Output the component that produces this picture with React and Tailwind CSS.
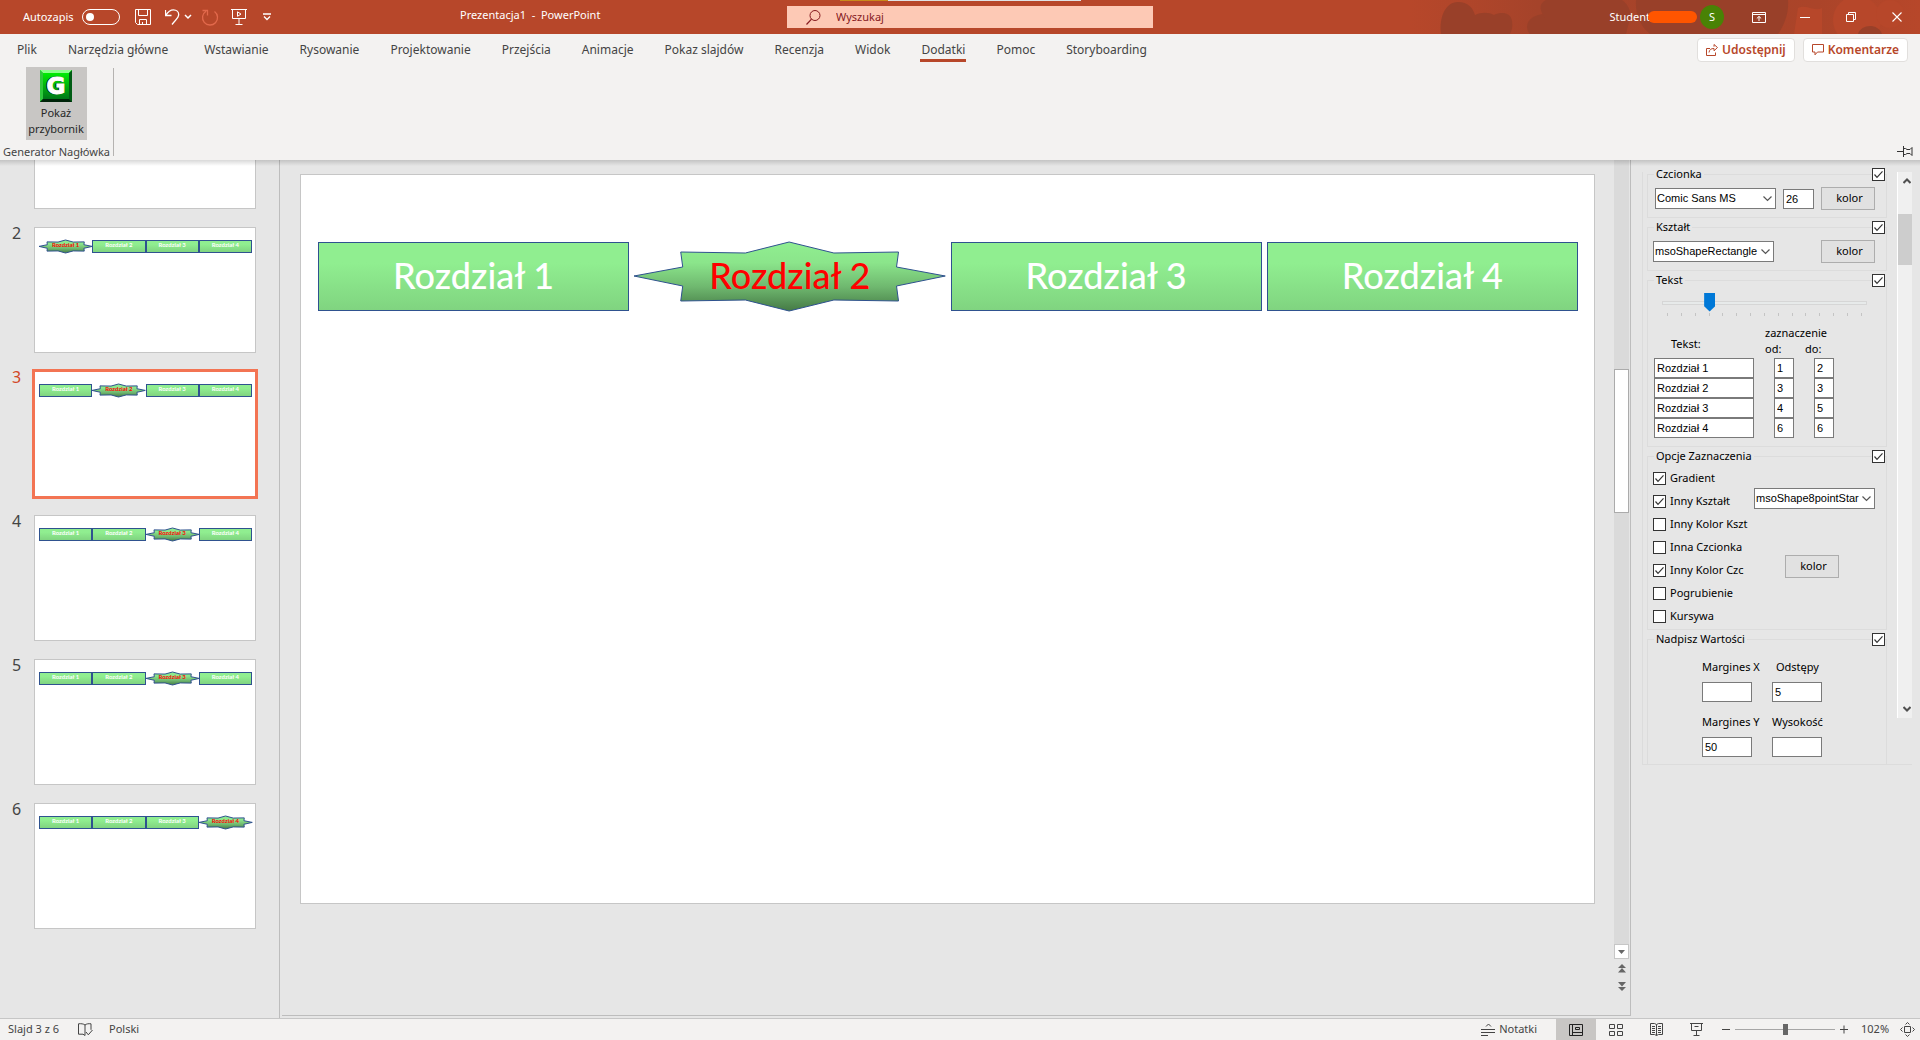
import React from "react";

const STAR =
  "156,0 201,11 266,10 264,25 313,34 264,44 266,59 201,58 156,69 112,58 47,59 49,44 0,34 49,25 47,10 112,11";

function Icon({ w = 16, h = 16, className = "", children }) {
  return (
    <svg
      width={w}
      height={h}
      viewBox={`0 0 ${w} ${h}`}
      fill="none"
      stroke="currentColor"
      strokeWidth="1"
      className={`shrink-0 ${className}`}
      aria-hidden="true"
    >
      {children}
    </svg>
  );
}

/* ---------- title bar ---------- */

function TitleArt() {
  return (
    <svg
      className="absolute inset-y-0 right-0 h-full w-[510px]"
      viewBox="0 0 510 34"
      preserveAspectRatio="xMaxYMid slice"
      aria-hidden="true"
    >
      <defs>
        <linearGradient id="art" x1="0" x2="1">
          <stop offset="0" stopColor="#a8442b" stopOpacity="0" />
          <stop offset="0.25" stopColor="#a5432a" />
          <stop offset="0.8" stopColor="#ab4429" />
          <stop offset="1" stopColor="#b7472a" />
        </linearGradient>
      </defs>
      <rect width="510" height="34" fill="url(#art)" />
      <g fill="#994029">
        <path d="M31 34c-2-16 4-32 17-32 10 0 15 6 17 13 6-3 14-3 19 0 8-4 17-2 18 6 1 5 0 9-2 13z" />
        <ellipse cx="135" cy="27" rx="18" ry="13" />
        <path d="M135 34V18C128 8 130 3 136 0h76c8 6 10 14 7 22l-3 12z" />
        <path d="M226 0h152c1 12-3 24-10 34h-128c-10-8-15-20-14-34z" />
      </g>
      <g fill="#b7472a">
        <circle cx="447" cy="20" r="24" />
        <path d="M388 8c8-4 16 4 24 0v26h-28z" />
        <circle cx="480" cy="14" r="14" />
      </g>
      <path d="M448 34c3-10 20-11 24 0z" fill="#994029" />
    </svg>
  );
}

function TitleBar() {
  return (
    <header className="relative flex h-[34px] shrink-0 items-center bg-[#b7472a] text-[12px] text-white">
      <TitleArt />
      <div className="absolute left-[840px] top-0 flex h-px w-[241px]">
        <span className="w-12 bg-[#c98a1b]" />
        <span className="flex-1 bg-[#dfe3e6]" />
      </div>
      <div className="flex w-[460px] shrink-0 items-center pb-1 pl-[23px] pt-1">
        <label htmlFor="autosave" className="w-[59px] text-[11px]">Autozapis</label>
        <input
          id="autosave"
          type="checkbox"
          role="switch"
          className="relative h-4 w-[38px] appearance-none rounded-full border border-white before:absolute before:left-[3px] before:top-[3px] before:h-2 before:w-2 before:rounded-full before:bg-white"
        />
        <button aria-label="Zapisz" className="ml-[15px]">
          <Icon w={16} h={16}>
            <path d="M.5.5h15v15H2.5l-2-2zM3.5.5v6h9v-6M4.5 15.5v-5h7v5M7.5 15v-2" />
          </Icon>
        </button>
        <button aria-label="Cofnij" className="ml-[14px]">
          <Icon w={15} h={16}>
            <path d="M.5 1v5.5h6M.8 6.300C3 2.500 5.500.8 8.500.8c3 0 5.200 2 5.200 4.800 0 3.500-3 5-6.700 9.900" strokeWidth="1.300" />
          </Icon>
        </button>
        <button aria-label="Opcje cofania" className="ml-1">
          <Icon w={8} h={6}><path d="M1 1l3 3 3-3" strokeWidth="1.500" /></Icon>
        </button>
        <button aria-label="Ponów" className="ml-[9px] text-[#e2694c]">
          <Icon w={18} h={17}>
            <path d="M5 2.200A7.500 7.500 0 1 0 13.500 2.500M1.500 1.500h5v5" strokeWidth="1.300" />
          </Icon>
        </button>
        <button aria-label="Pokaz od początku" className="ml-3">
          <Icon w={16} h={16}>
            <path d="M0 .5h16M1.500.5v9h13v-9M8 9.500v6M4.500 15.500h7" />
            <path d="M6.500 2.800v4.500l3.500-2.200z" />
          </Icon>
        </button>
        <button aria-label="Dostosuj pasek" className="ml-4">
          <Icon w={8} h={8}><path d="M0 1h8M1 3.500l3 3 3-3" strokeWidth="1.300" /></Icon>
        </button>
      </div>
      <h1 className="w-[327px] shrink-0 whitespace-pre pb-1 text-[11px]">Prezentacja1  -  PowerPoint</h1>
      <div className="flex h-[22px] w-[366px] shrink-0 items-center bg-[#fdc9b5] pl-[19px] text-[#861a1f]">
        <Icon w={15} h={15}>
          <circle cx="9" cy="5.500" r="5" />
          <path d="M5.500 9.200L.5 14.500" strokeWidth="1.200" />
        </Icon>
        <input
          aria-label="Wyszukaj"
          placeholder="Wyszukaj"
          className="ml-[15px] min-w-0 flex-1 bg-transparent text-[11px] outline-none placeholder:text-[#861a1f]"
        />
      </div>
      <div className="relative ml-auto flex items-center pr-[18px]">
        <span className="text-[11px]">Student</span>
        <span className="-ml-[2px] h-3 w-[49px] rounded-full bg-[#ff5500]" />
        <span className="ml-[3px] flex h-6 w-6 items-center justify-center rounded-full bg-[#498205] text-[11px]">S</span>
        <button aria-label="Opcje wyświetlania Wstążki" className="ml-7">
          <Icon w={14} h={11}>
            <path d="M.5.5h13v10H.5zM.5 2.500h13M7 9V4.500M4.800 6.500L7 4.400l2.200 2.100" />
          </Icon>
        </button>
        <button aria-label="Minimalizuj" className="ml-[34px]">
          <Icon w={10} h={10}><path d="M0 5.500h10" /></Icon>
        </button>
        <button aria-label="Przywróć" className="ml-9">
          <Icon w={10} h={10}><path d="M.5 2.500h7v7h-7zM2.500 2.500v-2h7v7h-2" /></Icon>
        </button>
        <button aria-label="Zamknij" className="ml-9">
          <Icon w={10} h={10}><path d="M.5.5l9 9M9.500.5l-9 9" strokeWidth="1.100" /></Icon>
        </button>
      </div>
    </header>
  );
}

/* ---------- ribbon ---------- */

const TABS = [
  "Plik", "Narzędzia główne", "Wstawianie", "Rysowanie", "Projektowanie", "Przejścia", "Animacje",
  "Pokaz slajdów", "Recenzja", "Widok", "Dodatki", "Pomoc", "Storyboarding",
];

function Tabs() {
  return (
    <nav className="flex h-[33px] items-center pl-4 pr-3 text-[12px] text-[#444]">
      <div className="flex h-full items-center gap-[29px]">
        {TABS.map((t) => (
          <button
            key={t}
            className={`h-[23px] whitespace-nowrap border-b-[3px] pl-px pt-[2px] ${
              t === "Dodatki" ? "border-[#b7472a]" : "border-transparent"
            } ${t === "Narzędzia główne" ? "pr-[6px]" : "pr-px"}`}
          >
            {t}
          </button>
        ))}
      </div>
      <div className="mb-[2px] ml-auto flex gap-2 text-[12px] font-semibold text-[#b7472a]">
        <button className="flex h-6 items-center gap-1 rounded-sm border border-[#e1dfdd] bg-white px-2">
          <Icon w={12} h={12}>
            <path d="M4 4.500H.5v7h9V8.500M3 8.500c.5-3 2-4 5-4V6.800L11.500 3.500 8 .5v2.200" />
          </Icon>
          Udostępnij
        </button>
        <button className="flex h-6 items-center gap-1 rounded-sm border border-[#e1dfdd] bg-white px-2">
          <Icon w={12} h={12}><path d="M.5.5h11v7.500H5.500L3 10.800V8H.5z" /></Icon>
          Komentarze
        </button>
      </div>
    </nav>
  );
}

function Logo() {
  return (
    <svg width="32" height="32" viewBox="0 0 32 32" aria-hidden="true">
      <defs>
        <linearGradient id="lg" x1="0" y1="0" x2="0" y2="1">
          <stop offset="0" stopColor="#00fa00" />
          <stop offset="1" stopColor="#006a1c" />
        </linearGradient>
      </defs>
      <rect width="32" height="32" fill="url(#lg)" />
      <path d="M0 0h32l-3 3H3z" fill="#8dff8d" />
      <path d="M0 0l3 3v26l-3 3z" fill="#2fc93c" />
      <path d="M32 0v32l-3-3V3z" fill="#005c14" />
      <path d="M0 32l3-3h26l3 3z" fill="#00240a" />
      <text x="15" y="24" textAnchor="middle" fontFamily="DejaVu Sans" fontWeight="700" fontSize="23" fill="#062a0a" stroke="#062a0a" strokeWidth="1">G</text>
      <text x="16" y="24" textAnchor="middle" fontFamily="DejaVu Sans" fontWeight="700" fontSize="23" fill="#fff" stroke="#fff" strokeWidth="1">G</text>
    </svg>
  );
}

function Ribbon() {
  return (
    <div className="flex h-[93px] items-start justify-between pr-[7px] text-[11px] text-[#444]">
      <section className="mt-px flex h-[88px] flex-col items-center justify-between border-r border-[#b5b3b1] px-[3px]">
        <button className="-mt-px mr-px flex h-[73px] w-[61px] flex-col items-center bg-[#c8c6c4] pt-[3px] leading-4 text-[#262626]">
          <Logo />
          <span className="mt-[3px]">Pokaż</span>
          <span>przybornik</span>
        </button>
        <h2 className="leading-[9px]">Generator Nagłówka</h2>
      </section>
      <button aria-label="Przypnij Wstążkę" className="mt-[79px] text-[#333]">
        <Icon w={16} h={11}>
          <path d="M0 5.500h6M6.500 0v11M6.500 2.500h2l1.500 1h3l2-2v8l-2-2h-3l-1.500 1h-2" />
        </Icon>
      </button>
    </div>
  );
}

/* ---------- slides ---------- */

const CHAPTERS = ["Rozdział 1", "Rozdział 2", "Rozdział 3", "Rozdział 4"];

function Star() {
  return (
    <svg className="absolute inset-0 h-full w-full overflow-visible" viewBox="0 0 313 69" preserveAspectRatio="none" aria-hidden="true">
      <defs>
        <linearGradient id="star" x1="0" y1="0" x2="0" y2="1">
          <stop offset="0" stopColor="#90ee90" />
          <stop offset="0.3" stopColor="#8be58b" />
          <stop offset="0.65" stopColor="#6fb86f" />
          <stop offset="1" stopColor="#457a45" />
        </linearGradient>
      </defs>
      <polygon points={STAR} fill="url(#star)" stroke="#2f528f" strokeWidth="1" vectorEffect="non-scaling-stroke" />
    </svg>
  );
}

function Bars({ active, small }) {
  return (
    <div
      className={
        small
          ? "grid grid-cols-4 pl-1 pr-[3px] pt-3 text-[6px]"
          : "grid grid-cols-4 gap-[5px] pl-[17px] pr-4 pt-[67px] text-[36px]"
      }
    >
      {CHAPTERS.map((c, i) => (
        <div
          key={c}
          className={
            (small
              ? "relative flex h-[13px] items-center justify-center pb-[3px] font-bold "
              : "relative flex h-[69px] items-center justify-center pb-1 font-medium ") +
            (i === active
              ? "text-[#ff0000]"
              : "border border-[#2f528f] bg-linear-to-b from-[#90ee90] from-30% to-[#80d480] text-white")
          }
        >
          {i === active && <Star />}
          <span className="relative whitespace-nowrap font-['Lato',sans-serif] leading-none">{c}</span>
        </div>
      ))}
    </div>
  );
}

function Thumb({ n, active, selected }) {
  return (
    <li className="flex h-[126px] pl-3">
      <span className={selected ? "w-[22px] text-[16px] leading-3 text-[#d24726]" : "w-[22px] text-[16px] leading-3 text-[#444]"}>
        {n}
      </span>
      <button
        aria-label={`Slajd ${n}`}
        className={
          selected
            ? "flex h-full w-[222px] flex-col border border-[#f37453] bg-white text-left outline-2 outline-[#f37453]"
            : "flex h-full w-[222px] flex-col border border-[#c6c6c6] bg-white text-left"
        }
      >
        <span className="block w-full">
          <Bars small active={active} />
        </span>
      </button>
    </li>
  );
}

function SlideList() {
  return (
    <aside className="w-[280px] shrink-0 overflow-hidden border-r border-[#bdbdbd]">
      <ol className="-mt-[77px] flex flex-col gap-[18px]">
        <li className="flex h-[126px] pl-[34px]">
          <button aria-label="Slajd 1" className="h-full w-[222px] border border-[#c6c6c6] bg-white" />
        </li>
        <Thumb n={2} active={0} />
        <Thumb n={3} active={1} selected />
        <Thumb n={4} active={2} />
        <Thumb n={5} active={2} />
        <Thumb n={6} active={3} />
      </ol>
    </aside>
  );
}

function Editor() {
  return (
    <main className="mb-[2px] ml-[2px] flex min-w-0 flex-1 border-b border-r border-[#bdbdbd]">
      <div className="min-w-0 flex-1 pl-[18px] pr-[19px] pt-[14px]">
        <div className="aspect-[1295/730] w-full border border-[#c6c6c6] bg-white">
          <Bars active={1} />
        </div>
      </div>
      <div className="mr-px flex w-[15px] flex-col items-center text-[#666]">
        <div className="w-full flex-1 bg-[#dadada] pt-[209px]">
          <div className="h-36 w-full border border-[#ababab] bg-white" />
        </div>
        <button aria-label="Przewiń w dół" className="flex h-[15px] w-[15px] items-center justify-center border border-[#c6c6c6] bg-white">
          <Icon w={7} h={4}><path d="M0 0h7L3.500 4z" fill="currentColor" stroke="none" /></Icon>
        </button>
        <button aria-label="Poprzedni slajd" className="mt-[5px]">
          <Icon w={8} h={9}><path d="M4 0l4 4H0zM4 4l4 4.500H0z" fill="currentColor" stroke="none" /></Icon>
        </button>
        <button aria-label="Następny slajd" className="mb-6 mt-[9px]">
          <Icon w={8} h={9}><path d="M4 9L0 5h8zM4 4.500L0 0h8z" fill="currentColor" stroke="none" /></Icon>
        </button>
      </div>
    </main>
  );
}

/* ---------- task pane ---------- */

function Check({ label, checked, hidden }) {
  return (
    <label className="flex items-center">
      <span className="relative block h-[13px] w-[13px]">
        <input
          type="checkbox"
          defaultChecked={checked}
          aria-label={hidden ? label : undefined}
          className="peer block h-[13px] w-[13px] appearance-none border border-[#333] bg-white"
        />
        <svg className="pointer-events-none absolute inset-0 hidden peer-checked:block" width="13" height="13" viewBox="0 0 13 13" fill="none" stroke="#333" strokeWidth="1.200" aria-hidden="true">
          <path d="M2.500 6.500L5 9.300l5.500-6" />
        </svg>
      </span>
      {!hidden && <span className="ml-1 whitespace-nowrap">{label}</span>}
    </label>
  );
}

function Select({ value, label }) {
  return (
    <span className="relative block h-[21px] w-[121px]">
      <select
        aria-label={label}
        className="block h-full w-full appearance-none border border-[#7a7a7a] bg-white pl-px font-['Liberation_Sans',sans-serif] text-[11px] outline-none"
      >
        <option>{value}</option>
      </select>
      <Icon w={9} h={6} className="pointer-events-none absolute right-1 top-2 text-[#555]">
        <path d="M.5.5l4 4 4-4" strokeWidth="1.200" />
      </Icon>
    </span>
  );
}

function Field({ value = "", label, width }) {
  return (
    <input
      aria-label={label}
      defaultValue={value}
      className={`block h-5 border border-[#7a7a7a] bg-white pl-[2px] font-['Liberation_Sans',sans-serif] text-[11px] outline-none ${width}`}
    />
  );
}

function ColorButton({ className = "" }) {
  return (
    <button className={`h-[23px] w-[54px] border border-[#adadad] bg-[#e1e1e1] pl-[3px] ${className}`}>kolor</button>
  );
}

function Group({ title, children, className = "" }) {
  return (
    <section className={`border-[#dcdcdc] ${className}`}>
      <header className="-mt-[7px] mr-px flex h-[13px] items-center justify-between">
        <h3 className="ml-[6px] bg-[#e6e6e6] px-[2px] pb-[3px] leading-[13px]">{title}</h3>
        <Check label={title} checked hidden />
      </header>
      {children}
    </section>
  );
}

const RANGES = [[1, 2], [3, 3], [4, 5], [6, 6]];
const OPTIONS = [
  ["Gradient", true], ["Inny Kształt", true], ["Inny Kolor Kszt", false], ["Inna Czcionka", false],
  ["Inny Kolor Czc", true], ["Pogrubienie", false], ["Kursywa", false],
];
const OVERRIDES = [["Margines X", ""], ["Odstępy", "5"], ["Margines Y", "50"], ["Wysokość", ""]];

function TextGroup() {
  return (
    <Group title="Tekst" className="border pb-2">
      <div className="ml-[14px] mt-[6px] w-[205px]">
        <input
          type="range"
          aria-label="Liczba rozdziałów"
          min="0"
          max="14"
          defaultValue="3"
          className="block h-[19px] w-full appearance-none bg-transparent [&::-webkit-slider-runnable-track]:h-1 [&::-webkit-slider-runnable-track]:border [&::-webkit-slider-runnable-track]:border-[#d6d6d6] [&::-webkit-slider-runnable-track]:bg-[#e7eaea] [&::-webkit-slider-thumb]:-mt-[9px] [&::-webkit-slider-thumb]:h-[19px] [&::-webkit-slider-thumb]:w-[11px] [&::-webkit-slider-thumb]:appearance-none [&::-webkit-slider-thumb]:bg-[#0078d7] [&::-webkit-slider-thumb]:[clip-path:polygon(0_0,100%_0,100%_72%,50%_100%,0_72%)]"
        />
        <div className="mt-px flex justify-between px-[5px]">
          {Array.from({ length: 15 }, (_, i) => (
            <span key={i} className="h-[3px] w-px bg-[#c4c4c4]" />
          ))}
        </div>
      </div>
      <div className="ml-[6px] mt-[9px] grid grid-cols-[100px_20px_20px] gap-x-5">
        <span className="row-span-2 self-center pl-[17px] pt-1 leading-4">Tekst:</span>
        <span className="col-span-2 -ml-[9px] leading-4">zaznaczenie</span>
        <span className="-ml-[9px] leading-4">od:</span>
        <span className="-ml-[9px] mb-px leading-4">do:</span>
        {CHAPTERS.map((c, i) => (
          <React.Fragment key={c}>
            <Field value={c} label={`Tekst ${i + 1}`} width="w-[100px]" />
            <Field value={RANGES[i][0]} label={`Od ${i + 1}`} width="w-5" />
            <Field value={RANGES[i][1]} label={`Do ${i + 1}`} width="w-5" />
          </React.Fragment>
        ))}
      </div>
    </Group>
  );
}

function TaskPane() {
  return (
    <aside className="w-[289px] shrink-0 pl-[11px] pr-2 pt-3 text-[11px] text-black">
      <div className="flex items-start border-b border-l border-[#dcdcdc] pl-[4px]">
        <div className="flex w-[240px] flex-col gap-[9px] pt-[2px]">
          <Group title="Czcionka" className="border pb-[7px]">
            <div className="mt-[6px] flex items-center pl-[7px]">
              <Select value="Comic Sans MS" label="Czcionka" />
              <span className="ml-[7px]"><Field value="26" label="Rozmiar" width="w-[31px]" /></span>
              <ColorButton className="ml-[7px]" />
            </div>
          </Group>
          <Group title="Kształt" className="border pb-[7px]">
            <div className="mt-[6px] flex items-center justify-between pl-[5px] pr-[11px]">
              <Select value="msoShapeRectangle" label="Kształt" />
              <ColorButton />
            </div>
          </Group>
          <TextGroup />
          <Group title="Opcje Zaznaczenia" className="border pb-px">
            <div className="mt-1 flex justify-between pl-[5px] pr-[11px]">
              <div className="flex flex-col">
                {OPTIONS.map(([l, on]) => (
                  <div key={l} className="flex h-[23px] items-center">
                    <Check label={l} checked={on} />
                  </div>
                ))}
              </div>
              <div className="flex flex-col items-start pt-[21px]">
                <Select value="msoShape8pointStar" label="Kształt zaznaczenia" />
                <ColorButton className="ml-[31px] mt-[46px]" />
              </div>
            </div>
          </Group>
          <Group title="Nadpisz Wartości" className="border-x border-t pb-[7px]">
            <div className="ml-[54px] mt-[13px] grid grid-cols-[50px_50px] gap-x-5 gap-y-3">
              {OVERRIDES.map(([l, v]) => (
                <label key={l} className="flex flex-col items-start gap-[7px] whitespace-nowrap leading-4">
                  <span className={l === "Odstępy" ? "pl-1" : undefined}>{l}</span>
                  <Field value={v} label={l} width="w-[50px]" />
                </label>
              ))}
            </div>
          </Group>
        </div>
        <div className="ml-auto flex h-[546px] w-[15px] flex-col border-l border-white bg-[#f0f0f0] text-[#505050]">
          <button aria-label="W górę" className="flex h-[18px] items-center pl-[5px]">
            <Icon w={8} h={6}><path d="M.5 5L4 1.500 7.500 5" strokeWidth="2" /></Icon>
          </button>
          <div className="mt-6 h-[51px] w-full bg-[#cdcdcd]" />
          <button aria-label="W dół" className="mt-auto flex h-[18px] items-center pl-[5px]">
            <Icon w={8} h={6}><path d="M.5 1L4 4.500 7.500 1" strokeWidth="2" /></Icon>
          </button>
        </div>
      </div>
    </aside>
  );
}

/* ---------- status bar ---------- */

function StatusBar() {
  return (
    <footer className="flex h-[22px] shrink-0 items-center border-t border-[#c6c6c6] bg-[#f3f2f1] pl-2 pr-[5px] text-[11px] text-[#444]">
      <span>Slajd 3 z 6</span>
      <button aria-label="Sprawdzanie pisowni" className="ml-[19px]">
        <Icon w={15} h={13}>
          <path d="M7 2C5.500.8 3 .5.500.8v10.400h4.500L7 12.500V2zM7 2c1.500-1.200 3.500-1.500 6-1.200v6M8 9l2.300 2.800L14.500 7" />
        </Icon>
      </button>
      <button className="ml-4">Polski</button>
      <button className="ml-auto flex items-center gap-1">
        <Icon w={14} h={13}><path d="M0 6.500h14M0 9.500h14M0 12.500h7M5 3.500L7.500 1 10 3.500" /></Icon>
        Notatki
      </button>
      <button aria-label="Normalny" className="ml-[19px] flex h-full w-10 items-center justify-center bg-[#c8c6c4] text-[#222]">
        <Icon w={14} h={12}><path d="M.5.5h13v11H.5zM3.500.5v11M3.500 8.500h10M6.500 3.500h4v2h-4z" /></Icon>
      </button>
      <button aria-label="Sortowanie slajdów" className="flex h-full w-10 items-center justify-center">
        <Icon w={14} h={12}><path d="M.5.5h5v4h-5zM8.500.5h5v4h-5zM.5 7.500h5v4h-5zM8.500 7.500h5v4h-5z" /></Icon>
      </button>
      <button aria-label="Widok do czytania" className="flex h-full w-10 items-center justify-center">
        <Icon w={13} h={13}>
          <path d="M.5.5h4l2 1 2-1h4v11h-4l-2 1-2-1h-4zM6.500 1.500v11M2 3.500h3M2 5.500h3M2 7.500h3M2 9.500h3M8 3.500h3M8 5.500h3M8 7.500h3M8 9.500h3" />
        </Icon>
      </button>
      <button aria-label="Pokaz slajdów" className="flex h-full w-10 items-center justify-center">
        <Icon w={13} h={13}><path d="M0 .5h13M1.500.5v7h10v-7M6.500 7.500v5M3.500 12.500h6M4.500 3.500h4" /></Icon>
      </button>
      <button aria-label="Pomniejsz" className="ml-[6px]"><Icon w={8} h={9}><path d="M0 4.500h8" /></Icon></button>
      <input
        type="range"
        aria-label="Powiększenie"
        min="0"
        max="100"
        defaultValue="50"
        className="ml-[5px] h-[11px] w-[100px] appearance-none bg-transparent [&::-webkit-slider-runnable-track]:h-px [&::-webkit-slider-runnable-track]:bg-[#a6a6a6] [&::-webkit-slider-thumb]:-mt-[5px] [&::-webkit-slider-thumb]:h-[11px] [&::-webkit-slider-thumb]:w-[5px] [&::-webkit-slider-thumb]:appearance-none [&::-webkit-slider-thumb]:bg-[#666]"
      />
      <button aria-label="Powiększ" className="ml-[5px]"><Icon w={8} h={9}><path d="M0 4.500h8M4 .5v8" /></Icon></button>
      <button className="ml-[13px] w-[27px] whitespace-nowrap text-left">102%</button>
      <button aria-label="Dopasuj" className="ml-3">
        <Icon w={15} h={15}>
          <path d="M4.500 4.500h6v6h-6zM5.500 2.500l2-2 2 2M5.500 12.500l2 2 2-2M2.500 5.500l-2 2 2 2M12.500 5.500l2 2-2 2" />
        </Icon>
      </button>
    </footer>
  );
}

export default function App() {
  return (
    <div className="flex h-screen flex-col overflow-hidden bg-[#e6e6e6] font-['Noto_Sans','Open_Sans',sans-serif]">
      <TitleBar />
      <div className="shrink-0 bg-[#f3f2f1]">
        <Tabs />
        <Ribbon />
      </div>
      <div className="relative flex min-h-0 flex-1">
        <div className="pointer-events-none absolute inset-x-0 top-0 z-10 h-[6px] bg-linear-to-b from-black/15 to-transparent" />
        <SlideList />
        <Editor />
        <TaskPane />
      </div>
      <StatusBar />
    </div>
  );
}
